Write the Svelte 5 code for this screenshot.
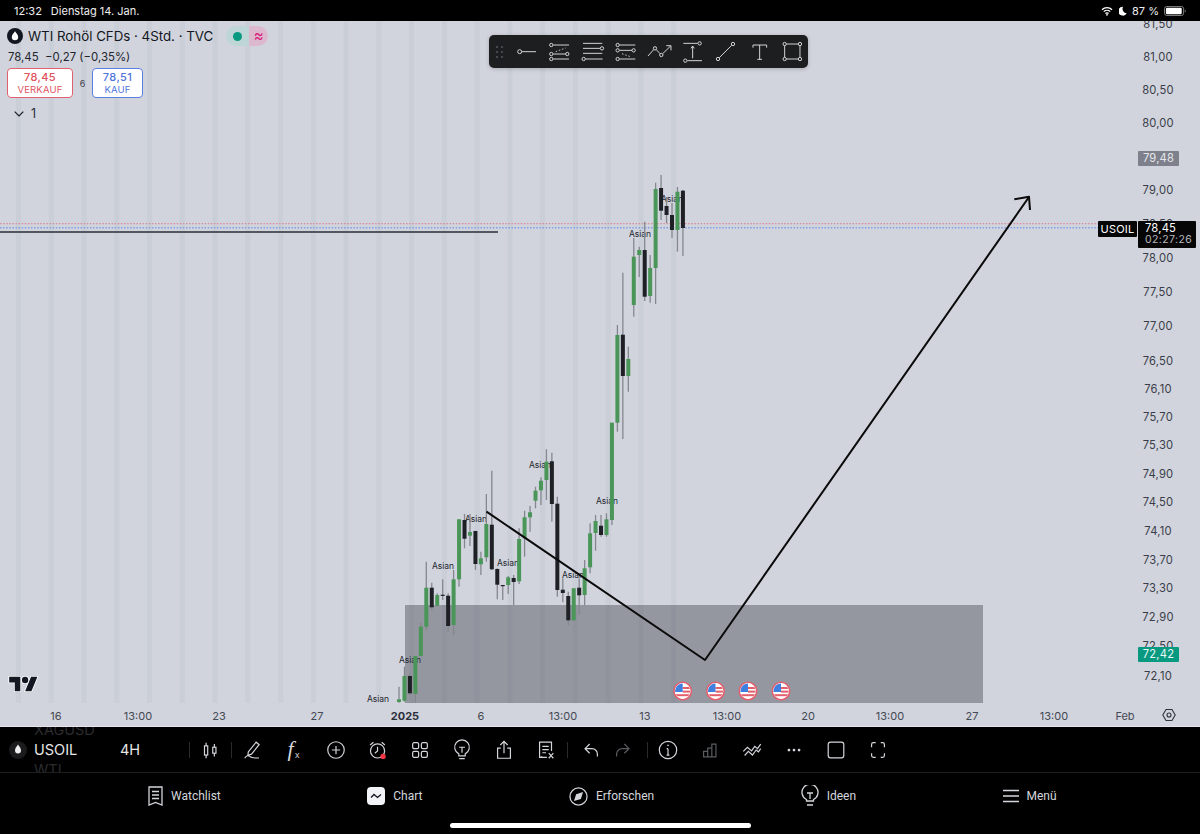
<script>
  // page-space y values, the svg viewBox starts at 21 so they can be read straight off the screen
  const candles = [
    ['g', 686.7, 702.7, 699.3, 702], ['g', 666.7, 701.7, 676, 700.7], ['b', 673.3, 695, 676, 693.3],
    ['g', 656, 702.7, 656, 694], ['g', 622.7, 656.7, 626.7, 656], ['g', 561.7, 630, 587.7, 626.7],
    ['b', 582.7, 610, 587.7, 607.3], ['g', 593.3, 606.7, 595, 605.7], ['b', 579.3, 600, 594.7, 595.7],
    ['b', 593.3, 631.7, 595.7, 626], ['g', 570, 635, 579.3, 625], ['g', 519.3, 586.7, 519.3, 579.3],
    ['b', 514, 548.3, 520, 538.7], ['g', 514, 546, 532, 535.7], ['b', 530.7, 570, 531, 564],
    ['g', 551.7, 575, 558.3, 564.3], ['g', 494, 561.7, 524, 557.3], ['b', 470.7, 570, 524.7, 569.3],
    ['b', 568.3, 599.3, 569, 584.7], ['b', 585, 600, 585, 586], ['g', 576, 594, 577.3, 585],
    ['b', 575, 605, 578, 582], ['g', 528.3, 584, 539, 581.3], ['g', 510.7, 556.7, 517.3, 538.3],
    ['g', 506, 531.7, 512.3, 517.3], ['g', 486.7, 508.3, 490.7, 500.7], ['g', 477.3, 505, 480.7, 490.3],
    ['g', 449.3, 500, 461.7, 480], ['b', 452.7, 521.7, 461.3, 504], ['b', 496.7, 596.7, 503.7, 590],
    ['b', 578.3, 602.3, 589.7, 593], ['b', 591.7, 625, 596, 620.3], ['g', 588.3, 620, 588.3, 620.3],
    ['b', 578.3, 615, 587.7, 595.3], ['g', 560, 605, 568.3, 595], ['g', 523.3, 573.3, 533.3, 567.3],
    ['g', 515, 550.7, 521, 533], ['b', 515, 536.7, 525.7, 535], ['g', 513.3, 536.7, 519.3, 535],
    ['g', 422.7, 525, 422.7, 520], ['g', 325, 431.7, 335, 422.7], ['b', 272.7, 439, 334.7, 376],
    ['g', 346.7, 391.7, 359, 376], ['g', 238, 316.7, 256.7, 305], ['g', 246.7, 277, 250, 255],
    ['b', 221.7, 301, 250, 296.7], ['g', 255, 302.7, 268, 296], ['g', 182.7, 304, 189, 268],
    ['b', 175, 220, 188, 210.7], ['b', 197, 223, 206, 215], ['b', 203, 238, 215, 230],
    ['g', 187, 251.7, 191.7, 230], ['b', 190, 256, 190.7, 228]
  ].map(([kind, high, low, top, bottom], i) => ({ kind, high, low, top, bottom, x: 399 + i * 5.46 }));

  const sessions = Array.from({ length: 21 }, (_, i) => 18.5 + i * 32.76);
  const asian = [[378, 700], [410, 661], [443, 567], [476, 520], [508, 564], [540, 466], [573, 576], [607, 502], [640, 235], [672, 200]];
  const flags = [682.7, 715.5, 748, 781];

  const prices = [
    ['81,50', 24], ['81,00', 57], ['80,50', 90], ['80,00', 123], ['79,00', 190], ['78,50', 224], ['78,00', 258],
    ['77,50', 292], ['77,00', 326], ['76,50', 361], ['76,10', 389], ['75,70', 417], ['75,30', 445], ['74,90', 474],
    ['74,50', 502], ['74,10', 531], ['73,70', 560], ['73,30', 588], ['72,90', 617], ['72,50', 646], ['72,10', 676]
  ];
  const times = [
    ['16', 56], ['13:00', 138], ['23', 219], ['27', 317], ['2025', 405, true], ['6', 481], ['13:00', 563], ['13', 645],
    ['13:00', 727], ['20', 808], ['13:00', 890], ['27', 972], ['13:00', 1054], ['Feb', 1125]
  ];
</script>

<div class="screen">
  <header class="status">
    <span class="clock">12:32</span>
    <span class="date">Dienstag 14. Jan.</span>
    <span class="status-right">
      <svg class="wifi" width="12" height="10" viewBox="0 0 13 11"><path d="M1 4a8 8 0 0 1 11 0M3 6.2a5 5 0 0 1 7 0M4.8 8.2a2.4 2.4 0 0 1 3.4 0" fill="none" stroke="#fff" stroke-width="1.5"/><circle cx="6.5" cy="9.7" r="1" fill="#fff"/></svg>
      <svg width="8" height="10" viewBox="0 0 9 11"><path d="M4.6.6A5 5 0 1 0 8.7 8 5 5 0 0 1 4.6.6z" fill="#fff"/></svg>
      <span>87 %</span>
      <svg width="22" height="10" viewBox="0 0 24 11"><rect x=".5" y=".5" width="21" height="10" rx="2.6" fill="none" stroke="#8b8b8b"/><rect x="2" y="2" width="17.4" height="7" rx="1.4" fill="#fff"/><path d="M22.8 4v3a1.6 1.6 0 0 0 0-3z" fill="#8b8b8b"/></svg>
    </span>
  </header>

  <main class="chart">
    <div class="plot">
      <svg class="canvas" viewBox="0 21 1200 682" width="1200" height="682">
        <defs>
          <clipPath id="flag-clip"><circle r="7.6" /></clipPath>
          <g id="us-flag">
            <circle r="8.7" fill="#fff" stroke="#e2606e" stroke-width="1.6" />
            <g clip-path="url(#flag-clip)">
              <rect x="-8" y="-8" width="16" height="16" fill="#fff" />
              <rect x="0" y="-4" width="8" height="2" fill="#e2606e" />
              <rect x="0" y="-.4" width="8" height="2" fill="#e2606e" />
              <rect x="-8" y="3.2" width="16" height="2" fill="#e2606e" />
              <rect x="-8" y="-8" width="8" height="9" fill="#3f7fe0" />
            </g>
          </g>
        </defs>

        {#each sessions as x}
          <rect class="session" x={x - 2.5} y="21" width="5" height="682" />
        {/each}

        <rect class="zone" x="405" y="605" width="578" height="98" />

        <line class="pdh" x1="0" y1="223.6" x2="1098" y2="223.6" />
        <line class="pdl" x1="0" y1="227.8" x2="1098" y2="227.8" />
        <line class="level" x1="0" y1="232" x2="498" y2="232" />

        {#each asian as [x, y]}
          <text class="asian" {x} {y}>Asian</text>
        {/each}

        {#each candles as c}
          <line class="wick" x1={c.x} y1={c.high} x2={c.x} y2={c.low} />
          <rect class={c.kind === 'g' ? 'up' : 'down'} x={c.x - 2} y={c.top} width="4" height={Math.max(c.bottom - c.top, 1.2)} />
        {/each}

        <polyline class="pen" points="486.5,511.7 705,660 1029,197" />
        <polyline class="pen" points="1014.3,199.3 1029,196.7 1030,210" />

        {#each flags as x}
          <use href="#us-flag" {x} y="691" />
        {/each}
      </svg>

      <div class="legend">
        <div class="legend-title">
          <svg class="drop" width="16" height="16" viewBox="0 0 16 16"><circle cx="8" cy="8" r="8" fill="#131722"/><path d="M8 3.2c1.8 2.4 3.2 3.9 3.2 5.9a3.2 3.2 0 0 1-6.4 0c0-2 1.4-3.5 3.2-5.9z" fill="#fff"/></svg>
          <span>WTI Rohöl CFDs · 4Std. · TVC</span>
          <span class="pills">
            <span class="pill-live"><i></i></span>
            <span class="pill-delay">≈</span>
          </span>
        </div>
        <div class="legend-quote">78,45 &nbsp;−0,27 (−0,35%)</div>
        <div class="legend-trade">
          <div class="trade sell"><b>78,45</b><small>VERKAUF</small></div>
          <span class="spread">6</span>
          <div class="trade buy"><b>78,51</b><small>KAUF</small></div>
        </div>
        <div class="legend-count">
          <svg width="10" height="6" viewBox="0 0 10 6"><path d="M.7.7 5 5 9.3.7" fill="none" stroke="#131722" stroke-width="1.2"/></svg>
          <span>1</span>
        </div>
      </div>

      <div class="draw-tools">
        <div class="grip"><i></i><i></i><i></i><i></i><i></i><i></i></div>
        <svg viewBox="90 30 100 98"><circle cx="119" cy="80" r="6"/><path d="M125 80h43"/></svg>
        <svg viewBox="187 30 100 98"><circle cx="212" cy="60" r="5"/><circle cx="212" cy="87" r="5"/><circle cx="212" cy="102" r="5"/><circle cx="260" cy="87" r="5"/><path d="M218 60h47M218 87h37M218 102h47"/><path class="dash" d="M225 80l30-11"/></svg>
        <svg viewBox="287 30 100 98"><circle cx="365" cy="70" r="5"/><circle cx="310" cy="102" r="5"/><path d="M308 55h58M308 70h51M308 85h58M316 102h51"/></svg>
        <svg viewBox="386 30 100 98"><circle cx="412" cy="60" r="5"/><circle cx="412" cy="76" r="5"/><circle cx="460" cy="76" r="5"/><circle cx="412" cy="102" r="5"/><path d="M418 60h47M418 76h37M418 102h47"/><path class="dash" d="M425 86l28 10"/></svg>
        <svg viewBox="488 30 100 98"><circle cx="524" cy="70" r="5"/><circle cx="543" cy="90" r="5"/><path d="M503 93l17-19M528 74l11 12M547 86l24-23M558 62h14v14"/></svg>
        <svg viewBox="588 30 100 98"><circle cx="659" cy="55" r="5"/><circle cx="616" cy="107" r="5"/><path d="M610 55h43M622 107h44M638 100V63M633 70l5-7 5 7"/></svg>
        <svg viewBox="687 30 100 98"><circle cx="714" cy="102" r="5"/><circle cx="759" cy="57" r="5"/><path d="M718 98l37-37"/></svg>
        <svg viewBox="787 30 100 98"><path d="M817 68v-8h41v8M837 60v43M830 103h14"/></svg>
        <svg viewBox="887 30 100 98"><circle cx="913" cy="57" r="5"/><circle cx="959" cy="57" r="5"/><circle cx="913" cy="102" r="5"/><circle cx="959" cy="102" r="5"/><path d="M918 57h36M918 102h36M913 62v35M959 62v35"/></svg>
      </div>

      <svg class="tv-logo" width="31" height="18" viewBox="-1.5 2.5 39 21"><path d="M14 22H7V11H0V4h14v18zM28 22h-8l7.5-18h8L28 22z" /><circle cx="20" cy="8" r="4" /></svg>

      <div class="price-axis">
        {#each prices as [label, y]}
          <span class="price" style="top:{y - 21}px">{label}</span>
        {/each}
        <span class="tag tag-high">79,48</span>
        <span class="tag tag-symbol">USOIL</span>
        <span class="tag tag-last">78,45<em>02:27:26</em></span>
        <span class="tag tag-low">72,42</span>
      </div>
    </div>

    <div class="time-axis">
      {#each times as [label, x, strong]}
        <span class:strong style="left:{x}px">{label}</span>
      {/each}
      <svg class="gear" width="14" height="14" viewBox="0 0 14 14"><path d="M4 1.5h6L13.2 7 10 12.5H4L.8 7z" fill="none" stroke="#2f323c" stroke-width="1.1"/><circle cx="7" cy="7" r="2" fill="none" stroke="#2f323c" stroke-width="1.1"/></svg>
    </div>
  </main>

  <section class="toolbar">
    <div class="symbol">
      <svg width="18" height="18" viewBox="0 0 18 18"><circle cx="9" cy="9" r="9" fill="#1b1b1d"/><path d="M9 3.5c1.7 2.4 3 3.9 3 5.9a3 3 0 0 1-6 0c0-2 1.3-3.5 3-5.9z" fill="#eee"/></svg>
      <div class="symbol-names">
        <span class="ghost">XAGUSD</span>
        <span class="current">USOIL</span>
        <span class="ghost">WTI</span>
      </div>
      <span class="interval">4H</span>
    </div>

    <i class="rule"></i>
    <button aria-label="Kerzen"><svg viewBox="0 0 24 24"><rect x="6" y="7.5" width="3.5" height="10"/><rect x="15" y="9" width="3.5" height="6.5"/><path d="M7.75 4v3.5M7.75 17.5V21M16.75 5.5V9M16.75 15.5V19"/></svg></button>
    <i class="rule"></i>
    <button aria-label="Zeichnen"><svg viewBox="0 0 24 24"><path d="M8 14 16.5 3.5l3.3 2.7-8.3 10.3-4 1.2zM4 21c2-3 4-3.5 5.5-2s5 2 10 1.5"/></svg></button>
    <button aria-label="Indikatoren"><svg viewBox="0 0 24 24"><text class="fx-f" x="5" y="19">f</text><text class="fx-x" x="13" y="21">x</text></svg></button>
    <button aria-label="Hinzufügen"><svg viewBox="0 0 24 24"><circle cx="12" cy="12" r="9"/><path d="M12 7.5v9M7.5 12h9"/></svg></button>
    <button aria-label="Alarm"><svg viewBox="0 0 24 24"><circle cx="11.5" cy="13" r="7.7"/><path d="M11.5 8.5V13l-3 2.5M3.5 6.5 7 3.5M16 3.5l3.5 3"/><circle class="alert" cx="17.5" cy="19" r="2.9"/></svg></button>
    <button aria-label="Layouts"><svg viewBox="0 0 24 24"><rect x="4" y="4" width="6.5" height="6.5" rx="1.5"/><rect x="13.5" y="4" width="6.5" height="6.5" rx="1.5"/><rect x="4" y="13.5" width="6.5" height="6.5" rx="1.5"/><rect x="13.5" y="13.5" width="6.5" height="6.5" rx="1.5"/></svg></button>
    <button aria-label="Ideen"><svg viewBox="0 0 24 24"><path d="M8.5 18.5v-2.3A8 8 0 1 1 15.5 16.2v2.3zM9 21.5h6M8.8 9h6.4M12 9v6"/></svg></button>
    <button aria-label="Teilen"><svg viewBox="0 0 24 24"><path d="M8.5 10H5v11h14V10h-3.5M12 15.5V3M8 6.5 12 2.5l4 4"/></svg></button>
    <button aria-label="Orderliste"><svg viewBox="0 0 24 24"><path d="M13 20H5V3.5h13V13M8 8h7M8 11.5h7M8 15h4M5 20.5l3-1.5M15 15.5l5 5.5M20 15.5 15 21"/></svg></button>
    <i class="rule"></i>
    <div class="history">
      <button aria-label="Rückgängig"><svg viewBox="0 0 24 24"><path d="M19 19v-2.5a6 6 0 0 0-6-6H6M10.5 5.5 5.5 10.5l5 5"/></svg></button>
      <button class="off" aria-label="Wiederholen"><svg viewBox="0 0 24 24"><path d="M5 19v-2.5a6 6 0 0 1 6-6h7M13.5 5.5l5 5-5 5"/></svg></button>
    </div>
    <i class="rule"></i>
    <button aria-label="Info"><svg viewBox="0 0 24 24"><circle cx="12" cy="12" r="9.5"/><path d="M12 10.5v7M10.5 10.5H12M10.5 17.5h3"/><circle class="solid" cx="12" cy="7" r=".9"/></svg></button>
    <button class="off" aria-label="Volumen"><svg viewBox="0 0 24 24"><path d="M5 19.5v-6h4.5v6zM9.5 19.5V10H14v9.5zM14 19.5v-14h4.5v14z"/></svg></button>
    <button aria-label="Vergleichen"><svg viewBox="0 0 24 24"><path d="M2.5 13.5 7 9l4.5 4 3.500-5 3 2.500 3.500-5M4 18l4-4.500 4.500 4 4-5.500 2.500 2 2.500-3.500"/></svg></button>
    <button aria-label="Mehr"><svg viewBox="0 0 24 24"><circle class="solid" cx="6.5" cy="12" r="1.5"/><circle class="solid" cx="12" cy="12" r="1.5"/><circle class="solid" cx="17.5" cy="12" r="1.5"/></svg></button>
    <button aria-label="Fenster"><svg viewBox="0 0 24 24"><rect x="3.5" y="3.5" width="17" height="17" rx="2.5"/></svg></button>
    <button aria-label="Vollbild"><svg viewBox="0 0 24 24"><path d="M5 9V6a2 2 0 0 1 2-2h2.5M15 4h2a2 2 0 0 1 2 2v3M19 15.5V18a2 2 0 0 1-2 2h-2M9.5 20H7a2 2 0 0 1-2-2v-2.5"/></svg></button>
  </section>

  <nav class="tabs">
    <a><svg width="15" height="20" viewBox="0 0 15 20"><path d="M1 1h13v18l-6.5-2.5L1 19zM4 5.5h7M4 9h7M4 12.5h7"/></svg>Watchlist</a>
    <a><span class="chart-tab"><svg width="18" height="18" viewBox="0 0 18 18"><path d="M4 10.5 7 7.5l3.5 3L14 7.5"/></svg></span>Chart</a>
    <a><svg width="19" height="19" viewBox="0 0 20 20"><circle cx="10" cy="10" r="9"/><path class="solid" d="M14.8 5.2 12.5 12.5 5.2 14.8 7.5 7.5z"/></svg>Erforschen</a>
    <a><svg width="18" height="22" viewBox="0 0 18 22"><path d="M5.5 16v-1.5a8 8 0 1 1 7 0V16zM6 20h6M6 8h6M9 8v6"/></svg>Ideen</a>
    <a><svg width="16" height="14" viewBox="0 0 16 14"><path d="M0 1.5h16M0 7h16M0 12.5h16"/></svg>Menü</a>
    <span class="home-bar"></span>
  </nav>
</div>

<style>
  :global(body) {
    margin: 0;
    background: #000;
  }
  .screen {
    width: 1200px;
    height: 834px;
    display: flex;
    flex-direction: column;
    font-family: Inter, "Liberation Sans", sans-serif;
    overflow: hidden;
  }

  .status {
    height: 21px;
    flex: none;
    display: flex;
    align-items: center;
    padding: 0 14px;
    background: #000;
    color: #eee;
    font-size: 11px;
  }
  .date {
    margin-left: 9px;
  }
  .status-right {
    margin-left: auto;
    display: flex;
    align-items: center;
    gap: 5px;
  }
  .wifi {
    margin-right: 1px;
  }

  .chart {
    flex: none;
    height: 706px;
    display: flex;
    flex-direction: column;
    background: #d1d4dd;
    border-bottom: 1px solid #e4e6ec;
    box-sizing: border-box;
  }
  .plot {
    position: relative;
    flex: none;
    height: 682px;
    overflow: hidden;
  }
  .canvas {
    display: block;
  }
  .session {
    fill: #caced7;
  }
  .zone {
    fill: rgba(64, 66, 76, 0.42);
  }
  .pdh,
  .pdl {
    stroke-width: 1.4;
    stroke-dasharray: 1.5 1.6;
  }
  .pdh {
    stroke: #d98c98;
  }
  .pdl {
    stroke: #7f9fe6;
  }
  .level {
    stroke: #2a2e36;
    stroke-width: 1.4;
  }
  .asian {
    font-size: 8.5px;
    fill: #23262f;
    text-anchor: middle;
    dominant-baseline: middle;
  }
  .wick {
    stroke: #85878f;
    stroke-width: 1.3;
  }
  .up {
    fill: #4a9658;
  }
  .down {
    fill: #1e2025;
  }
  .pen {
    fill: none;
    stroke: #0a0a0a;
    stroke-width: 2;
    stroke-linejoin: round;
  }

  .legend {
    position: absolute;
    left: 7px;
    top: 5px;
    color: #131722;
  }
  .legend-title {
    display: flex;
    align-items: center;
    height: 20px;
    font-size: 13.3px;
  }
  .drop {
    margin-right: 5px;
  }
  .pills {
    display: flex;
    margin-left: 13px;
    height: 20px;
    border-radius: 10px;
    overflow: hidden;
  }
  .pill-live {
    width: 23px;
    background: #bed6d6;
    display: flex;
    align-items: center;
    justify-content: center;
  }
  .pill-live i {
    width: 9px;
    height: 9px;
    border-radius: 50%;
    background: #089981;
  }
  .pill-delay {
    width: 19px;
    background: #dcb8cc;
    color: #d81b7e;
    text-align: center;
    line-height: 20px;
    font-size: 15px;
  }
  .legend-quote {
    margin: 1px 0 0 1px;
    height: 20px;
    line-height: 20px;
    font-size: 11.4px;
    color: #22252e;
  }
  .legend-trade {
    display: flex;
    align-items: center;
    margin-top: 1px;
  }
  .trade {
    height: 30px;
    box-sizing: border-box;
    background: #fff;
    border-radius: 4px;
    display: flex;
    flex-direction: column;
    align-items: center;
    justify-content: center;
  }
  .trade b {
    font-weight: 500;
    font-size: 11px;
    line-height: 13px;
    letter-spacing: 0.4px;
  }
  .trade small {
    font-size: 9.5px;
    line-height: 12px;
    letter-spacing: 0.2px;
  }
  .sell {
    width: 66px;
    border: 1px solid #e0616e;
    color: #e0525f;
  }
  .buy {
    width: 51px;
    border: 1px solid #5b7fe0;
    color: #4f74dc;
  }
  .spread {
    width: 19px;
    text-align: center;
    font-size: 9px;
    color: #3a3d48;
  }
  .legend-count {
    display: flex;
    align-items: center;
    gap: 7px;
    margin: 8px 0 0 7px;
    font-size: 12.5px;
    color: #2a2e39;
  }

  .draw-tools {
    position: absolute;
    left: 488.5px;
    top: 14px;
    width: 319.5px;
    height: 33px;
    display: flex;
    background: #1d1e20;
    border-radius: 5px;
    box-shadow: 0 1px 4px rgba(0, 0, 0, 0.2);
  }
  .draw-tools svg {
    width: 33.3px;
    height: 32.7px;
    flex: none;
    fill: none;
    stroke: #d4d4d4;
    stroke-width: 3;
  }
  .draw-tools .dash {
    stroke-dasharray: 5 5;
    stroke-width: 2.5;
  }
  .grip {
    width: 21px;
    flex: none;
    display: grid;
    grid-template-columns: 2px 2px;
    grid-auto-rows: 2px;
    gap: 3px 3px;
    align-content: center;
    justify-content: center;
  }
  .grip i {
    background: #55565a;
    border-radius: 50%;
  }

  .tv-logo {
    position: absolute;
    left: 8px;
    top: 654px;
  }
  .tv-logo path,
  .tv-logo circle {
    fill: #131722;
    stroke: #fff;
    stroke-width: 2;
    paint-order: stroke;
  }

  .price-axis {
    position: absolute;
    left: 1137px;
    top: 0;
    bottom: 0;
    width: 42px;
    font-size: 11.2px;
    letter-spacing: 0.2px;
    color: #3a3d48;
  }
  .price {
    position: absolute;
    left: 0;
    width: 42px;
    text-align: center;
    line-height: 14px;
    transform: translateY(-7px);
  }
  .tag {
    position: absolute;
    left: 1px;
    box-sizing: border-box;
    text-align: center;
    border-radius: 1px;
  }
  .tag-high {
    top: 130px;
    width: 41px;
    height: 15px;
    line-height: 15px;
    background: #7e818c;
    color: #e4e6ea;
  }
  .tag-symbol {
    top: 199.5px;
    left: -39px;
    width: 39px;
    height: 16px;
    line-height: 16px;
    background: #060607;
    color: #fff;
    font-size: 11px;
  }
  .tag-last {
    top: 199.5px;
    width: 58px;
    height: 27px;
    padding: 1px 0 0 7px;
    background: #060607;
    color: #fff;
    text-align: left;
    line-height: 12.5px;
  }
  .tag-last em {
    display: block;
    font-style: normal;
    font-size: 10.5px;
    letter-spacing: 0.4px;
    color: #b8b9bd;
  }
  .tag-low {
    top: 625.5px;
    width: 41px;
    height: 15px;
    line-height: 15px;
    background: #089981;
    color: #e8f7f3;
  }

  .time-axis {
    position: relative;
    flex: 1;
    font-size: 11px;
    color: #454852;
  }
  .time-axis span {
    position: absolute;
    top: 6px;
    line-height: 14px;
    transform: translateX(-50%);
  }
  .time-axis .strong {
    font-weight: 700;
    color: #2a2e39;
  }
  .gear {
    position: absolute;
    left: 1162px;
    top: 5px;
  }

  .toolbar {
    height: 46px;
    flex: none;
    display: flex;
    align-items: center;
    background: #000;
    border-bottom: 1px solid #1f1f1f;
    box-sizing: border-box;
  }
  .symbol {
    width: 189px;
    flex: none;
    height: 100%;
    display: flex;
    align-items: center;
    padding-left: 9px;
    box-sizing: border-box;
    overflow: hidden;
    color: #e6e6e6;
  }
  .symbol-names {
    display: flex;
    flex-direction: column;
    margin-left: 7px;
    width: 86px;
    font-size: 14.5px;
    line-height: 20px;
  }
  .ghost {
    color: #2b2b2e;
  }
  .interval {
    font-size: 14.5px;
  }
  .rule {
    width: 1px;
    height: 16px;
    margin-right: -1px;
    background: #2a2a2c;
  }
  .toolbar button {
    width: 42px;
    height: 46px;
    flex: none;
    padding: 0;
    background: none;
    border: 0;
    display: flex;
    align-items: center;
    justify-content: center;
    color: #d4d6dc;
  }
  .toolbar button svg {
    width: 22px;
    height: 22px;
    fill: none;
    stroke: currentColor;
    stroke-width: 1.3;
  }
  .toolbar .off {
    color: #5a5c60;
  }
  .history {
    display: flex;
    padding: 0 8px;
  }
  .history button {
    width: 32px;
  }
  .toolbar .solid {
    fill: currentColor;
    stroke: none;
  }
  .toolbar .alert {
    fill: #f23645;
    stroke: none;
  }
  .fx-f {
    font-family: "Liberation Serif", serif;
    font-style: italic;
    font-size: 24px;
    fill: currentColor;
    stroke: none;
  }
  .fx-x {
    font-size: 10px;
    fill: currentColor;
    stroke: none;
  }

  .tabs {
    position: relative;
    flex: 1;
    display: flex;
    gap: 146.5px;
    padding: 12px 0 0 148px;
    box-sizing: border-box;
    background: #000;
  }
  .tabs a {
    height: 22px;
    display: flex;
    align-items: center;
    gap: 8px;
    font-family: Roboto, sans-serif;
    font-size: 12px;
    color: #d4d6dc;
  }
  .tabs svg {
    fill: none;
    stroke: currentColor;
    stroke-width: 1.3;
  }
  .tabs .solid {
    stroke: none;
    fill: currentColor;
  }
  .chart-tab {
    width: 18px;
    height: 18px;
    border-radius: 4px;
    background: #f2f3f6;
    color: #131722;
    display: flex;
  }
  .home-bar {
    position: absolute;
    left: 450px;
    bottom: 6px;
    width: 301px;
    height: 5px;
    border-radius: 3px;
    background: #fff;
  }
</style>
